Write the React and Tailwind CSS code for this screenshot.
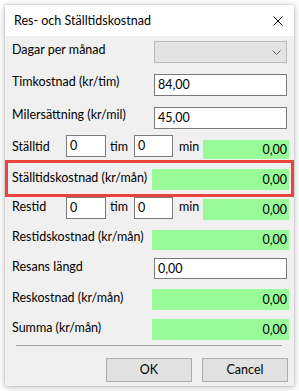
import React from "react";

const font = { fontFamily: 'Lato, "Noto Sans", sans-serif' };

function Label({ children, className = "" }) {
  return (
    <div className={"w-[140px] shrink-0 text-[12.5px] leading-[16px] text-black whitespace-nowrap " + className}>
      {children}
    </div>
  );
}

function Green({ className = "", value = "0,00" }) {
  return (
    <div className={"bg-[#98fb98] flex items-center justify-end pr-[2px] text-[12.5px] leading-[16px] text-black " + className}>
      {value}
    </div>
  );
}

function TextBox({ className = "", value = "" }) {
  return (
    <div className={"bg-white border border-[#7a7a7a] text-[12.5px] leading-[16px] text-black pl-[3px] pt-[2px] " + className}>
      {value}
    </div>
  );
}

const small = "text-[12.5px] leading-[16px] text-black";

export default function App() {
  return (
    <div className="w-[299px] h-[391px] bg-white overflow-hidden" style={font}>
      <div className="ml-[5px] mt-[5px] w-[289px] h-[381px] bg-[#f0f0f0] flex flex-col shadow-[0_0_0_1px_rgba(0,0,0,0.06),0_1px_7px_rgba(0,0,0,0.28)]">
        {/* Title bar */}
        <div className="h-[31px] bg-white flex items-center justify-between pl-[9px] pr-[11px]">
          <span className={small}>Res- och Ställtidskostnad</span>
          <svg width="10" height="10" viewBox="0 0 10 10" className="block">
            <path d="M0.5 0.5 L9.5 9.5 M9.5 0.5 L0.5 9.5" stroke="#000" strokeWidth="1" fill="none" />
          </svg>
        </div>

        {/* Dagar per månad */}
        <div className="flex items-start h-[22px] mt-[5px] pl-[7px]">
          <Label className="mt-[1px]">Dagar per månad</Label>
          <div className="ml-[2px] w-[133px] h-[22px] bg-[#e3e3e3] border border-[#b9b9b9] flex items-center justify-end pr-[5px]">
            <svg width="9" height="5" viewBox="0 0 9 5">
              <path d="M0.5 0.5 L4.5 4.5 L8.5 0.5" stroke="#606060" strokeWidth="1" fill="none" />
            </svg>
          </div>
        </div>

        {/* Timkostnad */}
        <div className="flex items-start h-[22px] mt-[11px] pl-[7px]">
          <Label className="mt-[0px]">Timkostnad (kr/tim)</Label>
          <TextBox className="ml-[2px] w-[133px] h-[22px]" value="84,00" />
        </div>

        {/* Milersättning */}
        <div className="flex items-start h-[22px] mt-[11px] pl-[7px]">
          <Label className="mt-[0px]">Milersättning (kr/mil)</Label>
          <TextBox className="ml-[2px] w-[133px] h-[22px]" value="45,00" />
        </div>

        {/* Ställtid */}
        <div className="flex items-start h-[25px] mt-[6px] pl-[7px]">
          <div className={"w-[54px] shrink-0 mt-[4px] " + small}>Ställtid</div>
          <TextBox className="w-[40px] h-[22px]" value="0" />
          <div className={"w-[28px] pl-[4px] mt-[4px] " + small}>tim</div>
          <TextBox className="w-[39px] h-[22px]" value="0" />
          <div className={"w-[30px] pl-[6px] mt-[4px] " + small}>min</div>
          <Green className="w-[86px] h-[19px] mt-[5px]" />
        </div>

        {/* Ställtidskostnad - highlighted */}
        <div className="h-[37px] border-[3px] border-[#e8453c] flex items-start pl-[4px]">
          <Label className="mt-[7px]">Ställtidskostnad (kr/mån)</Label>
          <Green className="w-[137px] h-[21px] mt-[6px]" />
        </div>

        {/* Restid */}
        <div className="flex items-start h-[23px] pl-[7px]">
          <div className={"w-[54px] shrink-0 mt-[2px] " + small}>Restid</div>
          <TextBox className="w-[40px] h-[22px]" value="0" />
          <div className={"w-[28px] pl-[4px] mt-[2px] " + small}>tim</div>
          <TextBox className="w-[39px] h-[22px]" value="0" />
          <div className={"w-[30px] pl-[6px] mt-[2px] " + small}>min</div>
          <Green className="w-[86px] h-[21px] mt-[2px]" />
        </div>

        {/* Restidskostnad */}
        <div className="flex items-start h-[20px] mt-[10px] pl-[7px]">
          <Label className="-mt-[1px]">Restidskostnad (kr/mån)</Label>
          <Green className="w-[137px] h-[20px]" />
        </div>

        {/* Resans längd */}
        <div className="flex items-start h-[21px] mt-[8px] pl-[7px]">
          <Label className="mt-[1px]">Resans längd</Label>
          <TextBox className="ml-[2px] w-[133px] h-[21px]" value="0,00" />
        </div>

        {/* Reskostnad */}
        <div className="flex items-start h-[21px] mt-[10px] pl-[7px]">
          <Label className="mt-[1px]">Reskostnad (kr/mån)</Label>
          <Green className="w-[137px] h-[21px]" />
        </div>

        {/* Summa */}
        <div className="flex items-start h-[21px] mt-[9px] pl-[7px]">
          <Label className="mt-[1px]">Summa (kr/mån)</Label>
          <Green className="w-[137px] h-[21px]" />
        </div>

        {/* Separator */}
        <div className="mt-[5px] ml-[11px] w-[266px] h-px bg-[#a0a0a0]" />

        {/* Buttons */}
        <div className="mt-[12px] flex justify-end gap-[10px] pr-[6px]">
          <button className={"w-[86px] h-[24px] bg-[#e1e1e1] border border-[#adadad] " + small}>OK</button>
          <button className={"w-[86px] h-[24px] bg-[#e1e1e1] border border-[#adadad] " + small}>Cancel</button>
        </div>
      </div>
    </div>
  );
}
